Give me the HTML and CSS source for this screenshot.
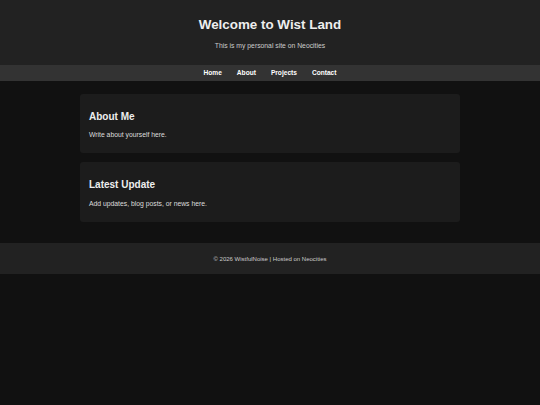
FILE: index.html
```html
<!DOCTYPE html>
<html lang="en">
<head>
<meta charset="utf-8">
<title>Wist Land</title>
<link rel="stylesheet" href="styles.css">
</head>
<body>
<header class="site-header">
  <h1 class="site-title">Welcome to Wist Land</h1>
  <p class="site-tagline">This is my personal site on Neocities</p>
</header>
<nav class="site-nav">
  <a href="#">Home</a>
  <a href="#">About</a>
  <a href="#">Projects</a>
  <a href="#">Contact</a>
</nav>
<main class="content">
  <section class="card">
    <h2 class="card-title">About Me</h2>
    <p class="card-text">Write about yourself here.</p>
  </section>
  <section class="card">
    <h2 class="card-title">Latest Update</h2>
    <p class="card-text">Add updates, blog posts, or news here.</p>
  </section>
</main>
<footer class="site-footer">
  <p>&copy; 2026 WistfulNoise | Hosted on Neocities</p>
</footer>
</body>
</html>
```

FILE: styles.css
```css
html, body {
  margin: 0;
  padding: 0;
  background: #111111;
  color: #e6e6e6;
  font-family: "Liberation Sans", Arial, sans-serif;
}

.site-header {
  background: #222222;
  text-align: center;
  padding: 17px 0 15.5px;
}

.site-title {
  margin: 0;
  font-size: 13.4px;
  line-height: 16px;
  font-weight: bold;
  color: #eeeeee;
}

.site-tagline {
  margin: 8.5px 0 0;
  font-size: 6.8px;
  line-height: 8px;
  color: #cccccc;
}

.site-nav {
  background: #333333;
  height: 16px;
  display: flex;
  justify-content: center;
  align-items: center;
  gap: 15px;
}

.site-nav a {
  color: #ffffff;
  text-decoration: none;
  font-weight: bold;
  font-size: 6.6px;
  line-height: 8px;
}

.content {
  width: 380px;
  margin: 0 auto;
  padding: 13px 0 21px;
  display: flex;
  flex-direction: column;
  gap: 9px;
}

.card {
  background: #1c1c1c;
  border-radius: 3px;
  padding: 17px 9px 14.2px;
}

.card-title {
  margin: 0;
  font-size: 10px;
  line-height: 12px;
  font-weight: bold;
  color: #eeeeee;
}

.card-text {
  margin: 8.3px 0 0;
  font-size: 6.8px;
  line-height: 8px;
  color: #dddddd;
}

.site-footer {
  background: #222222;
  text-align: center;
  padding: 12px 0 11.3px;
}

.site-footer p {
  margin: 0;
  font-size: 6px;
  line-height: 8px;
  color: #cccccc;
}
```
